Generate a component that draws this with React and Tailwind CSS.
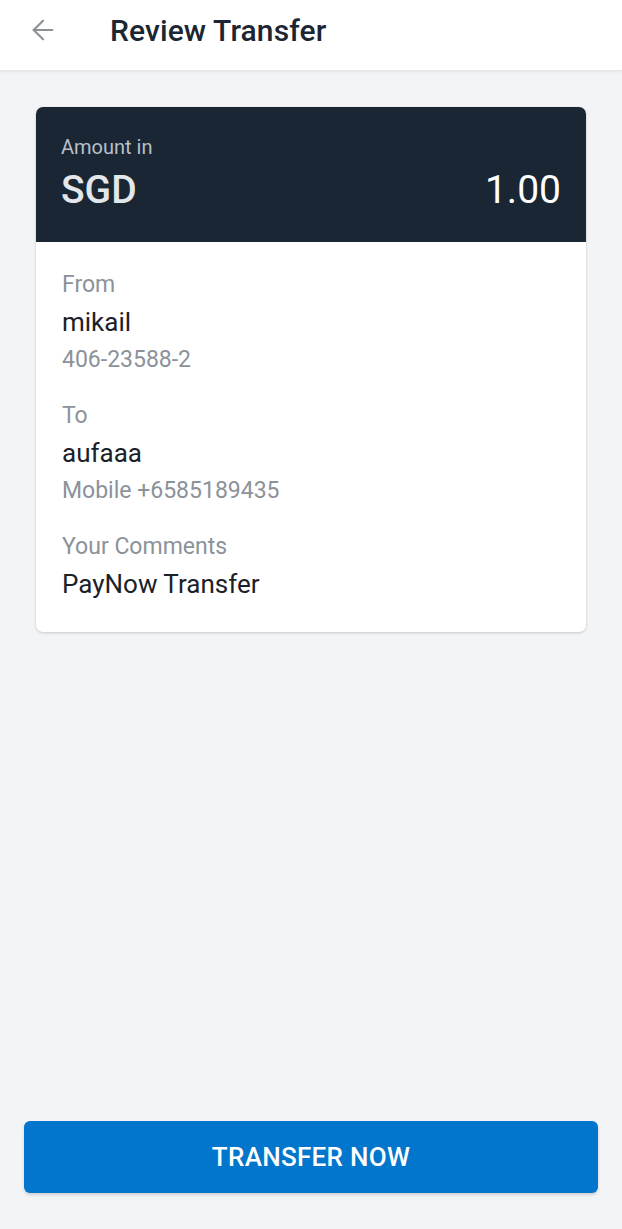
import { ArrowLeft } from "lucide-react";

function Field({ label, value, sub }) {
  return (
    <div>
      <div className="text-[23px] leading-[37px] text-[#8b929a]">{label}</div>
      <div className="text-[26px] leading-[38px] text-[#1b2129]">{value}</div>
      {sub && <div className="text-[23px] leading-[37px] text-[#8b929a]">{sub}</div>}
    </div>
  );
}

export default function App() {
  return (
    <div className="min-h-screen flex flex-col bg-[#f3f4f6]" style={{ fontFamily: "Roboto, 'Noto Sans', sans-serif" }}>
      {/* Header */}
      <div className="h-[71px] bg-white border-b border-[#e3e5e8] shadow-[0_1px_2px_rgba(0,0,0,0.06)] flex items-center px-[27px] pb-[10px]">
        <ArrowLeft className="w-[32px] h-[32px] text-[#8c9197]" strokeWidth={1.6} />
        <h1 className="ml-[51px] text-[30px] font-medium text-[#1c2632] tracking-[0.1px]">Review Transfer</h1>
      </div>

      {/* Card */}
      <div className="mx-[36px] mt-[36px] rounded-[7px] bg-white shadow-[0_1px_3px_rgba(0,0,0,0.18)] overflow-hidden">
        <div className="h-[135px] bg-[#1a2634] px-[25px] pt-[25px]">
          <div className="text-[20px] leading-[30px] text-[#b9c0c8]">Amount in</div>
          <div className="flex items-center justify-between mt-[4px]">
            <span className="text-[39px] leading-[48px] font-medium text-[#e4e7ea]">SGD</span>
            <span className="text-[39px] leading-[48px] text-white">1.00</span>
          </div>
        </div>
        <div className="px-[26px] pt-[24px] pb-[29px] flex flex-col gap-[19px]">
          <Field label="From" value="mikail" sub="406-23588-2" />
          <Field label="To" value="aufaaa" sub="Mobile +6585189435" />
          <Field label="Your Comments" value="PayNow Transfer" />
        </div>
      </div>

      <div className="flex-1" />

      {/* Button */}
      <div className="px-[24px] pb-[36px]">
        <button className="w-full h-[72px] rounded-[6px] bg-[#0275cc] shadow-[0_2px_3px_rgba(0,0,0,0.15)] text-white text-[26px] font-medium tracking-[0.3px]">
          TRANSFER NOW
        </button>
      </div>
    </div>
  );
}
